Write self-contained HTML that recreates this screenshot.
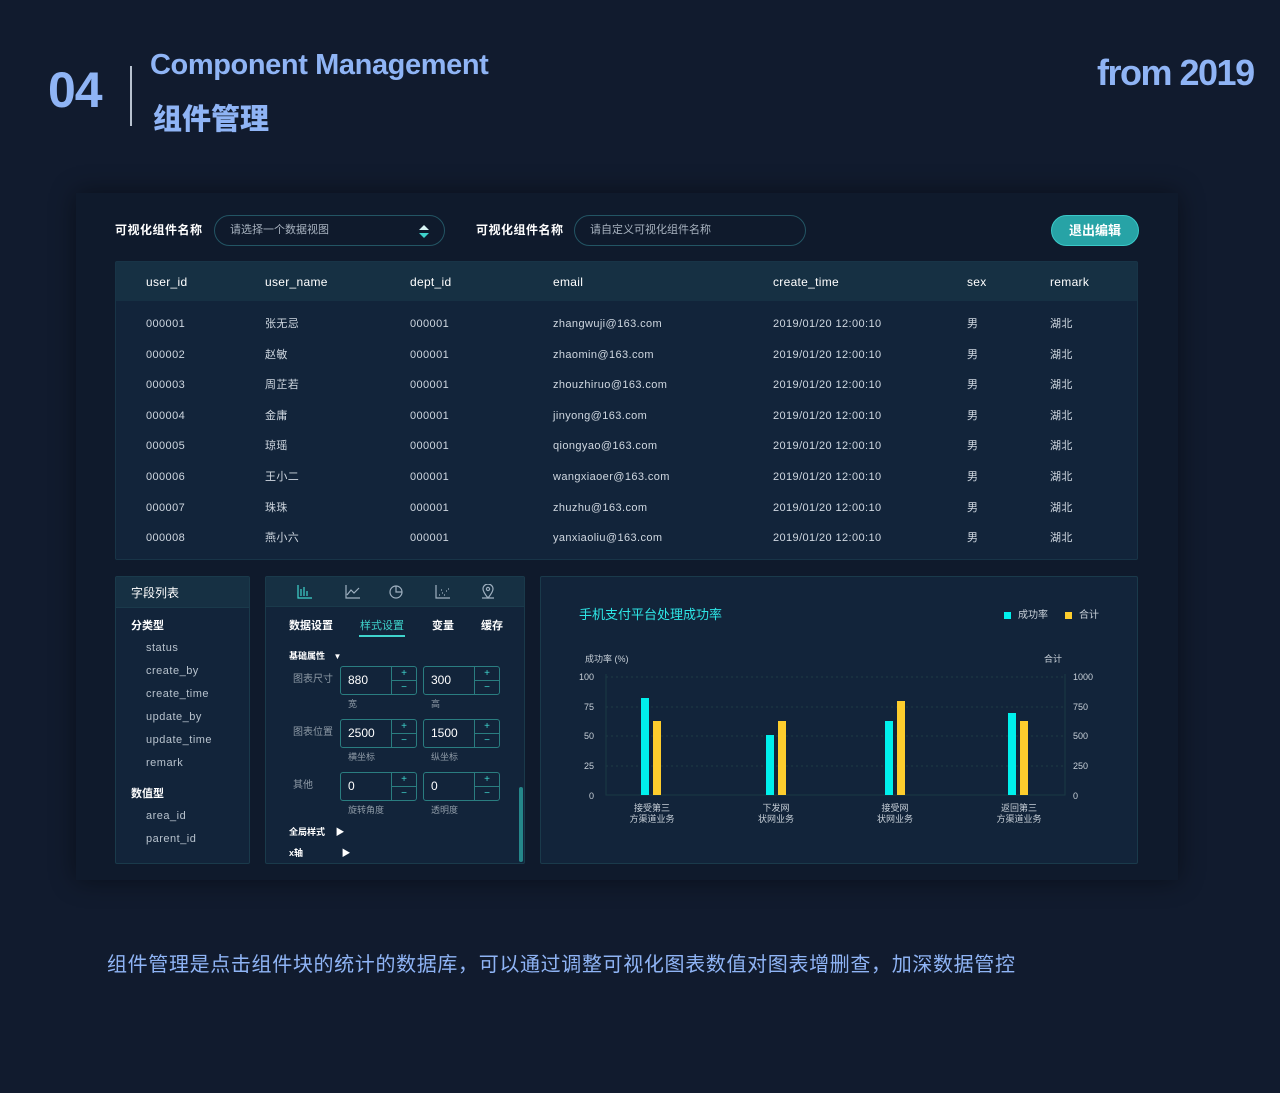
<!DOCTYPE html>
<html><head><meta charset="utf-8"><style>
*{margin:0;padding:0;box-sizing:border-box}
body{width:1280px;height:1093px;background:#111b2e;font-family:"Liberation Sans","Noto Sans CJK SC",sans-serif;color:#dfe6ee;position:relative;overflow:hidden}
.a{position:absolute}
.hd{color:#8fb4f5;font-weight:bold}
.card{left:76px;top:193px;width:1102px;height:687px;background:#0f1a2c;box-shadow:0 0 24px rgba(0,0,0,.45)}
.lbl{font-size:12px;font-weight:bold;color:#fff;line-height:14px}
.inp{border:1px solid #235564;border-radius:16px;height:31px;font-size:11px;color:#a7b2bf;padding:8px 15px;line-height:13px}
.tbl{left:115px;top:261px;width:1023px;height:299px;background:#12243a;border:1px solid #183447;border-radius:2px}
.th{left:0;top:0;width:100%;height:39px;background:#163043}
.c{position:absolute;font-size:11px;color:#cfd7e0;line-height:13px;letter-spacing:.4px}
.h{position:absolute;font-size:12px;color:#fff;top:13px;line-height:14px;letter-spacing:.3px}
.pn{background:#12243a;border:1px solid #1a3a4b;border-radius:2px}
.fl{font-size:11px;color:#b7c2cd;position:absolute;letter-spacing:.5px;line-height:13px}
.box{position:absolute;width:77px;height:29px;border:1px solid #2a7d80;border-radius:3px;font-size:12px;color:#fff;padding:6px 7px;line-height:15px}
.box i{position:absolute;right:0;top:0;width:25px;height:27px;border-left:1px solid #2a7d80;font-style:normal;color:#3fd3cc;font-size:10px;line-height:13px;text-align:center}
.box i b{display:block;height:14px;border-bottom:1px solid #2a7d80;font-weight:normal}
.sm{font-size:9px;color:#8e9aa6;position:absolute;line-height:11px}
.ax{font-size:9px;color:#c8d0d8;position:absolute;line-height:11px}
</style></head><body>
<div class="a hd" style="left:48px;top:62px;font-size:50px;letter-spacing:-1px;line-height:56px">04</div>
<div class="a" style="left:130px;top:66px;width:2px;height:60px;background:#b8c2cf"></div>
<div class="a hd" style="left:150px;top:48px;font-size:29px;letter-spacing:-.4px;line-height:34px">Component Management</div>
<div class="a hd" style="left:153px;top:99px;font-size:29px;line-height:36px;font-family:'Noto Sans CJK SC',sans-serif;font-weight:900">组件管理</div>
<div class="a hd" style="left:1097px;top:52px;font-size:36px;letter-spacing:-1.5px;line-height:42px">from 2019</div>

<div class="a card"></div>
<div class="a lbl" style="left:115px;top:223px;letter-spacing:.5px">可视化组件名称</div>
<div class="a inp" style="left:214px;top:215px;width:231px">请选择一个数据视图
<svg class="a" style="left:204px;top:9px" width="10" height="13"><path d="M5 0L10 5H0Z" fill="#d8f4f4"/><path d="M5 13L10 8H0Z" fill="#3fd3cc"/></svg></div>
<div class="a lbl" style="left:476px;top:223px;letter-spacing:.5px">可视化组件名称</div>
<div class="a inp" style="left:574px;top:215px;width:232px">请自定义可视化组件名称</div>
<div class="a" style="left:1051px;top:215px;width:88px;height:31px;border-radius:16px;background:#27a3a6;border:1px solid #3ac9c9;color:#fff;font-size:13px;font-weight:bold;text-align:center;line-height:29px">退出编辑</div>

<div class="a tbl"><div class="a th"></div>
<div class="h" style="left:30px">user_id</div><div class="h" style="left:149px">user_name</div><div class="h" style="left:294px">dept_id</div><div class="h" style="left:437px">email</div><div class="h" style="left:657px">create_time</div><div class="h" style="left:851px">sex</div><div class="h" style="left:934px">remark</div>
<div id="rows"></div></div>
<script>
var n=['张无忌','赵敏','周芷若','金庸','琼瑶','王小二','珠珠','燕小六'],e=['zhangwuji','zhaomin','zhouzhiruo','jinyong','qiongyao','wangxiaoer','zhuzhu','yanxiaoliu'],h='';
for(var i=0;i<8;i++){var t=56+i*30.6;h+='<div class="c" style="left:30px;top:'+t+'px">00000'+(i+1)+'</div><div class="c" style="left:149px;top:'+t+'px">'+n[i]+'</div><div class="c" style="left:294px;top:'+t+'px">000001</div><div class="c" style="left:437px;top:'+t+'px">'+e[i]+'@163.com</div><div class="c" style="left:657px;top:'+t+'px">2019/01/20 12:00:10</div><div class="c" style="left:851px;top:'+t+'px">男</div><div class="c" style="left:934px;top:'+t+'px">湖北</div>';}
document.getElementById('rows').innerHTML=h;
</script>

<div class="a pn" style="left:115px;top:576px;width:135px;height:288px">
<div class="a" style="left:0;top:0;width:133px;height:31px;background:#163043;border-bottom:1px solid #1a3a4b"></div>
<div class="a lbl" style="left:15px;top:9px;font-weight:normal">字段列表</div>
<div class="a lbl" style="left:15px;top:42px;font-size:11px">分类型</div>
<div class="fl" style="left:30px;top:65px">status</div><div class="fl" style="left:30px;top:88px">create_by</div><div class="fl" style="left:30px;top:111px">create_time</div><div class="fl" style="left:30px;top:134px">update_by</div><div class="fl" style="left:30px;top:157px">update_time</div><div class="fl" style="left:30px;top:180px">remark</div>
<div class="a lbl" style="left:15px;top:210px;font-size:11px">数值型</div>
<div class="fl" style="left:30px;top:233px">area_id</div><div class="fl" style="left:30px;top:256px">parent_id</div>
</div>

<div class="a pn" style="left:265px;top:576px;width:260px;height:288px">
<div class="a" style="left:0;top:0;width:258px;height:30px;background:#163043;border-bottom:1px solid #1a3a4b"></div>
<svg class="a" style="left:30px;top:7px" width="200" height="16" fill="none" stroke-width="1.2">
<path d="M2 1V14H16M5 5V12M8 3V12M11 7V12" stroke="#3fd3cc"/>
<path d="M50 1V14H64M51 11L55 6L58 9L63 4" stroke="#9fb0c0"/>
<circle cx="100" cy="8" r="6" stroke="#9fb0c0"/><path d="M100 2V8H106" stroke="#9fb0c0"/>
<path d="M140 1V14H154M143 11h1M146 9h1M148 11h1M150 7h1M152 5h1M145 6h1" stroke="#9fb0c0"/>
<path d="M192 14c-4-5-5-7-5-9a5 5 0 0 1 10 0c0 2-1 4-5 9zM186 14h12" stroke="#9fb0c0"/><circle cx="192" cy="5" r="1.6" stroke="#9fb0c0"/>
</svg>
<div class="a lbl" style="left:23px;top:42px;font-size:11px">数据设置</div>
<div class="a lbl" style="left:94px;top:42px;font-size:11px;color:#3fd3cc;font-weight:normal">样式设置</div>
<div class="a" style="left:93px;top:58px;width:46px;height:2px;background:#3fd3cc"></div>
<div class="a lbl" style="left:166px;top:42px;font-size:11px">变量</div>
<div class="a lbl" style="left:215px;top:42px;font-size:11px">缓存</div>
<div class="a lbl" style="left:23px;top:72px;font-size:9px">基础属性 <span style="font-size:8px;margin-left:6px">▼</span></div>
<div class="sm" style="left:27px;top:97px;font-size:10px">图表尺寸</div>
<div class="box" style="left:74px;top:89px">880<i><b>+</b>−</i></div><div class="box" style="left:157px;top:89px">300<i><b>+</b>−</i></div>
<div class="sm" style="left:82px;top:122px">宽</div><div class="sm" style="left:165px;top:122px">高</div>
<div class="sm" style="left:27px;top:150px;font-size:10px">图表位置</div>
<div class="box" style="left:74px;top:142px">2500<i><b>+</b>−</i></div><div class="box" style="left:157px;top:142px">1500<i><b>+</b>−</i></div>
<div class="sm" style="left:82px;top:175px">横坐标</div><div class="sm" style="left:165px;top:175px">纵坐标</div>
<div class="sm" style="left:27px;top:203px;font-size:10px">其他</div>
<div class="box" style="left:74px;top:195px">0<i><b>+</b>−</i></div><div class="box" style="left:157px;top:195px">0<i><b>+</b>−</i></div>
<div class="sm" style="left:82px;top:228px">旋转角度</div><div class="sm" style="left:165px;top:228px">透明度</div>
<div class="a lbl" style="left:23px;top:248px;font-size:9px">全局样式 <span style="margin-left:8px">▶</span></div>
<div class="a lbl" style="left:23px;top:269px;font-size:9px">x轴 <span style="margin-left:36px">▶</span></div>
<div class="a" style="left:253px;top:210px;width:4px;height:75px;background:#25878a;border-radius:2px"></div>
</div>

<div class="a pn" style="left:540px;top:576px;width:598px;height:288px"></div>
<div class="a" style="left:579px;top:607px;font-size:13px;color:#2ee6e6;line-height:16px">手机支付平台处理成功率</div>
<div class="a" style="left:1004px;top:612px;width:7px;height:7px;background:#00f0ec"></div><div class="ax" style="left:1018px;top:610px;font-size:10px">成功率</div>
<div class="a" style="left:1065px;top:612px;width:7px;height:7px;background:#fdcd2d"></div><div class="ax" style="left:1079px;top:610px;font-size:10px">合计</div>
<div class="ax" style="left:585px;top:654px">成功率 (%)</div><div class="ax" style="left:1044px;top:654px">合计</div>
<svg class="a" style="left:540px;top:660px" width="598" height="170">
<g stroke="#1e3d44" stroke-dasharray="2 3"><path d="M66 17H525M66 47H525M66 76H525M66 106H525"/></g>
<path d="M66 14V135H525V14" stroke="#1a3a44" fill="none"/>
<g fill="#00f0ec"><rect x="101" y="38" width="8" height="97"/><rect x="226" y="75" width="8" height="60"/><rect x="345" y="61" width="8" height="74"/><rect x="468" y="53" width="8" height="82"/></g>
<g fill="#fdcd2d"><rect x="113" y="61" width="8" height="74"/><rect x="238" y="61" width="8" height="74"/><rect x="357" y="41" width="8" height="94"/><rect x="480" y="61" width="8" height="74"/></g>
<g font-size="9" fill="#c8d0d8" font-family="Liberation Sans"><text x="54" y="20" text-anchor="end">100</text><text x="54" y="50" text-anchor="end">75</text><text x="54" y="79" text-anchor="end">50</text><text x="54" y="109" text-anchor="end">25</text><text x="54" y="139" text-anchor="end">0</text>
<text x="533" y="20">1000</text><text x="533" y="50">750</text><text x="533" y="79">500</text><text x="533" y="109">250</text><text x="533" y="139">0</text>
<g text-anchor="middle" font-family="Noto Sans CJK SC"><text x="112" y="151">接受第三</text><text x="112" y="162">方渠道业务</text><text x="236" y="151">下发网</text><text x="236" y="162">状网业务</text><text x="355" y="151">接受网</text><text x="355" y="162">状网业务</text><text x="479" y="151">返回第三</text><text x="479" y="162">方渠道业务</text></g></g>
</svg>

<div class="a" style="left:107px;top:952px;font-size:20px;color:#8fb4f5;letter-spacing:.65px;line-height:26px">组件管理是点击组件块的统计的数据库，可以通过调整可视化图表数值对图表增删查，加深数据管控</div>
</body></html>
